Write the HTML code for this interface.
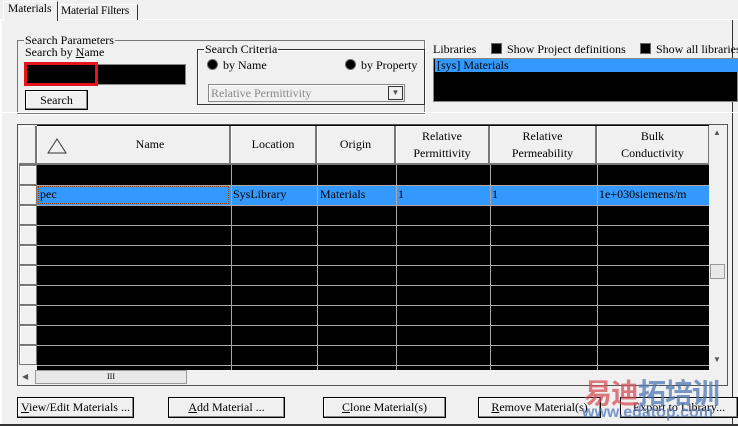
<!DOCTYPE html>
<html><head><style>
*{margin:0;padding:0;box-sizing:border-box}
body{width:738px;height:426px;background:#f0f0f0;font-family:"Liberation Serif",serif;font-size:12px;color:#000;position:relative;overflow:hidden}
.a{position:absolute}
.t{white-space:nowrap}
.btn{position:absolute;border:1px solid #000;box-shadow:inset -1px -1px #888,inset 1px 1px #fff;background:#f0f0f0;text-align:center;line-height:19px}
.hdr{position:absolute;top:126px;height:39px;background:#f0f0f0;border-right:2px solid #777;border-bottom:2px solid #777;box-shadow:inset 1px 1px #fff;text-align:center;line-height:17px;display:flex;align-items:center;justify-content:center}
.rh{position:absolute;left:19px;width:18px;height:20px;background:#f0f0f0;border:1px solid #777;box-shadow:inset 1px 1px #fff}
.vl{position:absolute;top:165px;width:1px;height:205px;background:#aaa}
.hl{position:absolute;left:37px;width:672px;height:1px;background:#aaa}
.rb{display:inline-block;width:11px;height:11px;border-radius:50%;background:#000;border:1px solid #666;vertical-align:-1px;margin-right:5px}
.cb{display:inline-block;width:11px;height:11px;background:#000;border:1px solid #666;vertical-align:-1px;margin-right:5px}
</style></head><body>
<div class="a" style="left:0;top:19px;width:738px;height:1px;background:#fff"></div>
<div class="a" style="left:3px;top:1px;width:55px;height:20px;background:#f0f0f0;border:1px solid #fff;border-bottom:none;border-right:1px solid #333"></div>
<div class="a t" style="left:8px;top:3px;font-size:11.5px">Materials</div>
<div class="a" style="left:58px;top:4px;width:80px;height:16px;border:1px solid #fff;border-right:1px solid #333;border-bottom:none"></div>
<div class="a t" style="left:61px;top:5px;font-size:11.5px;letter-spacing:-0.2px">Material Filters</div>
<div class="a" style="left:0;top:20px;width:2px;height:406px;background:#fff"></div>
<div class="a" style="left:0;top:424px;width:738px;height:2px;background:#333"></div>
<div class="a" style="left:732px;top:20px;width:1px;height:404px;background:#333"></div>
<div class="a" style="left:17px;top:40px;width:408px;height:74px;border:1px solid #777;box-shadow:1px 1px #fff"></div>
<div class="a t" style="left:24px;top:33px;background:#f0f0f0;padding:0 1px">Search Parameters</div>
<div class="a t" style="left:25px;top:45px">Search by <u>N</u>ame</div>
<div class="a" style="left:24px;top:64px;width:162px;height:21px;background:#000;border:1px solid #888"></div>
<div class="a" style="left:24px;top:62px;width:74px;height:24px;border:3px solid #e8141c"></div>
<div class="btn" style="left:25px;top:90px;width:63px;height:20px">Search</div>
<div class="a" style="left:197px;top:49px;width:228px;height:56px;border:1px solid #333;box-shadow:inset 1px 1px #fff"></div>
<div class="a t" style="left:204px;top:42px;background:#f0f0f0;padding:0 1px">Search Criteria</div>
<div class="a t" style="left:207px;top:58px"><span class="rb"></span>by Name</div>
<div class="a t" style="left:345px;top:58px"><span class="rb"></span>by Property</div>
<div class="a" style="left:208px;top:84px;width:197px;height:18px;border:1px solid #888;box-shadow:inset 1px 1px #fff"></div>
<div class="a t" style="left:211px;top:86px;color:#888">Relative Permittivity</div>
<div class="a" style="left:388px;top:86px;width:15px;height:14px;border:1px solid #333;background:#f0f0f0;text-align:center;font-size:8px;line-height:12px;color:#555">▼</div>
<div class="a t" style="left:433px;top:42px">Libraries</div>
<div class="a t" style="left:491px;top:42px"><span class="cb"></span>Show Project definitions</div>
<div class="a t" style="left:640px;top:42px"><span class="cb"></span>Show all libraries</div>
<div class="a" style="left:433px;top:58px;width:305px;height:44px;background:#000;border:1px solid #888"></div>
<div class="a" style="left:435px;top:59px;width:303px;height:13px;background:#3399ff"></div>
<div class="a t" style="left:437px;top:58px">[sys] Materials</div>
<div class="a" style="left:0;top:112px;width:738px;height:1px;background:#fff"></div>
<div class="a" style="left:17px;top:124px;width:711px;height:262px;border:1px solid #555;background:#000"></div>
<div class="a" style="left:18px;top:125px;width:19px;height:245px;background:#f0f0f0"></div>
<div class="hdr" style="left:19px;width:18px"></div>
<div class="hdr" style="left:37px;width:194px;padding-left:34px">Name</div>
<svg class="a" style="left:47px;top:137px" width="20" height="18"><path d="M1 16 L10 2 L19 16 Z" fill="none" stroke="#333"/></svg>
<div class="hdr" style="left:231px;width:86px">Location</div>
<div class="hdr" style="left:317px;width:79px">Origin</div>
<div class="hdr" style="left:396px;width:94px">Relative<br>Permittivity</div>
<div class="hdr" style="left:490px;width:107px">Relative<br>Permeability</div>
<div class="hdr" style="left:597px;width:113px">Bulk<br>Conductivity</div>
<div class="a" style="left:37px;top:185px;width:672px;height:20px;background:#3399ff"></div>
<div class="a" style="left:38px;top:186px;width:191px;height:18px;border:1px dotted #a04000"></div>
<div class="a t" style="left:40px;top:187px">pec</div>
<div class="a t" style="left:233px;top:187px">SysLibrary</div>
<div class="a t" style="left:320px;top:187px">Materials</div>
<div class="a t" style="left:398px;top:187px">1</div>
<div class="a t" style="left:492px;top:187px">1</div>
<div class="a t" style="left:599px;top:187px">1e+030siemens/m</div>
<div class="vl" style="left:231px"></div><div class="vl" style="left:317px"></div><div class="vl" style="left:396px"></div><div class="vl" style="left:490px"></div><div class="vl" style="left:597px"></div>
<div class="hl" style="top:185px"></div><div class="hl" style="top:205px"></div><div class="hl" style="top:225px"></div><div class="hl" style="top:245px"></div><div class="hl" style="top:265px"></div><div class="hl" style="top:285px"></div><div class="hl" style="top:305px"></div><div class="hl" style="top:325px"></div><div class="hl" style="top:345px"></div><div class="hl" style="top:365px"></div>
<div class="rh" style="top:165px"></div><div class="rh" style="top:185px"></div><div class="rh" style="top:205px"></div><div class="rh" style="top:225px"></div><div class="rh" style="top:245px"></div><div class="rh" style="top:265px"></div><div class="rh" style="top:285px"></div><div class="rh" style="top:305px"></div><div class="rh" style="top:325px"></div><div class="rh" style="top:345px"></div>
<div class="a" style="left:709px;top:125px;width:18px;height:245px;background:#f0f0f0"></div>
<div class="a" style="left:713px;top:128px;font-size:8px;color:#555">▲</div>
<div class="a" style="left:710px;top:264px;width:15px;height:15px;border:1px solid #999;background:#e8e8e8"></div>
<div class="a" style="left:713px;top:355px;font-size:8px;color:#555">▼</div>
<div class="a" style="left:18px;top:370px;width:709px;height:15px;background:#f0f0f0"></div>
<div class="a" style="left:22px;top:372px;font-size:8px;color:#555">◀</div>
<div class="a" style="left:35px;top:370px;width:152px;height:14px;border:1px solid #999;background:#e8e8e8;text-align:center;font-size:8px;line-height:12px">III</div>
<div class="btn" style="left:17px;top:397px;width:117px;height:21px"><u>V</u>iew/Edit Materials ...</div>
<div class="btn" style="left:168px;top:397px;width:117px;height:21px"><u>A</u>dd Material ...</div>
<div class="btn" style="left:323px;top:397px;width:123px;height:21px"><u>C</u>lone Material(s)</div>
<div class="btn" style="left:478px;top:397px;width:123px;height:21px"><u>R</u>emove Material(s)</div>
<div class="btn" style="left:620px;top:397px;width:118px;height:21px">Export to Library...</div>
<div class="a t" style="left:584px;top:372px;font-family:'Noto Sans CJK SC',sans-serif;font-size:28px;font-weight:bold;color:rgba(210,80,90,.75);letter-spacing:-1px">易迪<span style="color:rgba(80,120,180,.75)">拓培训</span></div>
<div class="a t" style="left:582px;top:404px;font-family:'Liberation Sans',sans-serif;font-size:16px;font-weight:bold;color:rgba(80,120,190,.75)">www.edatop.com</div>
</body></html>
